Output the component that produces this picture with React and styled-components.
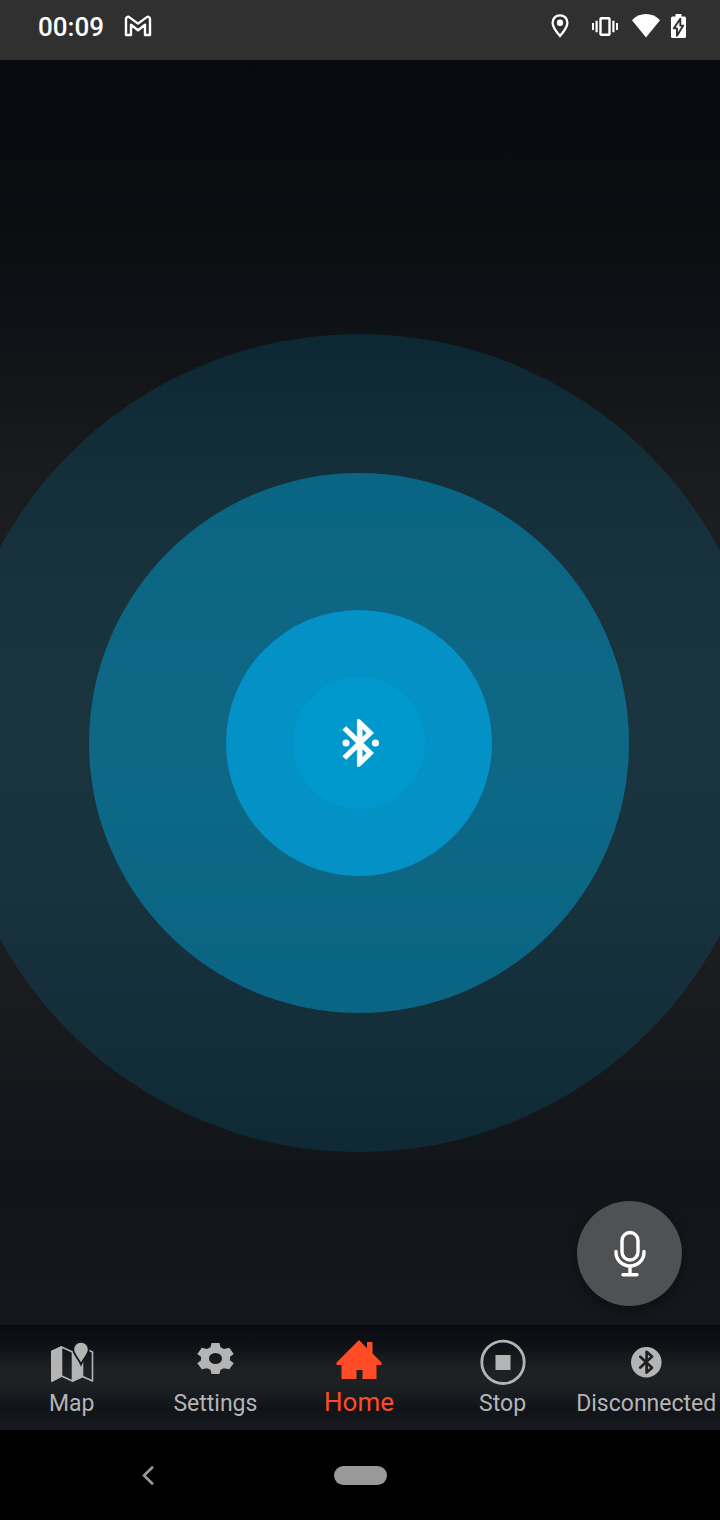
import React from "react";
import styled, { createGlobalStyle } from "styled-components";

const GlobalStyle = createGlobalStyle`
  *, *::before, *::after { box-sizing: border-box; }
  body { margin: 0; background: #000; font-family: Roboto, "Liberation Sans", sans-serif; }
  button { appearance: none; border: 0; padding: 0; background: none; color: inherit; font: inherit; cursor: pointer; }
  svg { display: block; }
`;

const Screen = styled.div`
  display: flex;
  flex-direction: column;
  min-height: 100vh;
  overflow: hidden;
`;

const StatusBar = styled.header`
  display: flex;
  align-items: center;
  justify-content: space-between;
  height: 60px;
  padding: 0 34px 8px 38px;
  background: #303030;
  color: #fff;
`;

const StatusGroup = styled.div`
  display: flex;
  align-items: center;
  gap: ${(p) => p.$gap}px;
`;

const Clock = styled.time`
  padding-top: 2px;
  font-size: 26px;
  line-height: 30px;
  font-weight: 500;
`;

const Stage = styled.main`
  position: relative;
  flex: 1;
  display: flex;
  align-items: center;
  justify-content: center;
  padding: 101px 2px 0 0;
  overflow: hidden;
  background: linear-gradient(
    #070b0f 0%,
    #0a0c10 12%,
    #0e1115 20%,
    #191b1e 33%,
    #202224 50%,
    #1e2023 62%,
    #191b1f 74%,
    #111418 88%,
    #14171c 100%
  );
`;

const Ring = styled.div`
  flex: none;
  display: flex;
  align-items: center;
  justify-content: center;
  width: ${(p) => p.$size}px;
  height: ${(p) => p.$size}px;
  border-radius: 50%;
  background: ${(p) => p.$color};
`;

const ConnectButton = styled.button`
  display: grid;
  place-items: center;
  width: 132px;
  height: 132px;
  border-radius: 50%;
  background: #0099cd;
`;

const MicButton = styled.button`
  position: absolute;
  right: 38px;
  bottom: 19px;
  display: grid;
  place-items: center;
  width: 105px;
  height: 105px;
  border-radius: 50%;
  background: #505153;
  box-shadow: 0 5px 12px rgba(0, 0, 0, 0.35);
`;

const TabBar = styled.nav`
  display: grid;
  grid-template-columns: repeat(5, minmax(0, 1fr));
  height: 105px;
  padding: 15px 2px 0 0;
  background: linear-gradient(#090b0f 0%, #0e1216 20%, #1e2124 43%, #1e2124 57%, #101318 80%, #171b20 100%);
`;

const Tab = styled.a`
  display: flex;
  flex-direction: column;
  align-items: center;
  gap: 4px;
  color: ${(p) => (p.$active ? "#ff4b26" : "#b4b4b4")};
  font-size: ${(p) => (p.$active ? 26 : 23)}px;
  line-height: ${(p) => (p.$active ? 28 : 32)}px;
  white-space: nowrap;
  text-decoration: none;
`;

const SystemBar = styled.footer`
  display: grid;
  grid-template-columns: repeat(3, 1fr);
  place-items: center;
  height: 90px;
  padding: 0 42px;
  background: #000;
`;

const SystemButton = styled.button`
  display: grid;
  place-items: center;
  width: 72px;
  height: 48px;
`;

const HomePill = styled.span`
  width: 53px;
  height: 19px;
  border-radius: 10px;
  background: #999;
`;

const MailIcon = () => (
  <svg width="28" height="22" viewBox="0 0 28 22" fill="none" stroke="#fff" strokeWidth="2.4" strokeLinejoin="round">
    <path d="M2 20V4C2 2 4 1.200 5.500 2.400L14 8.600L22.500 2.400C24 1.200 26 2 26 4V20H21V9.800L14 15.200L7 9.800V20Z" />
  </svg>
);

const PinIcon = () => (
  <svg width="18" height="24" viewBox="0 0 18 24" fill="none">
    <path d="M9 1.300C4.800 1.300 1.600 4.500 1.600 8.700C1.600 13.500 9 22 9 22S16.400 13.500 16.400 8.700C16.400 4.500 13.200 1.300 9 1.300Z" stroke="#fff" strokeWidth="2.3" />
    <circle cx="9" cy="8.800" r="3.200" fill="#fff" />
  </svg>
);

const VibrateIcon = () => (
  <svg width="26" height="20" viewBox="0 0 26 20" fill="#fff">
    <rect x="8.500" y="2.200" width="9" height="16.600" rx="0.800" fill="none" stroke="#fff" strokeWidth="2.400" />
    <path d="M0 7h2v7H0zM3.500 4.700h2.200v11.600H3.500zM20.300 4.700h2.200v11.600h-2.200zM24 7h2v7h-2z" />
  </svg>
);

const WifiIcon = () => (
  <svg width="28" height="24" viewBox="0 0 28 24" fill="#fff">
    <path d="M0 6.200C3.800 2.200 8.500 0 14 0S24.200 2.200 28 6.200L14 23.600Z" />
  </svg>
);

const BatteryIcon = () => (
  <svg width="15" height="24" viewBox="0 0 15 24">
    <path fill="#fff" d="M4.500 0H10.500V2.400H13.500Q15 2.400 15 3.900V22.500Q15 24 13.500 24H1.500Q0 24 0 22.500V3.900Q0 2.400 1.500 2.400H4.500Z" />
    <path fill="#fff" stroke="#303030" strokeWidth="1.900" strokeLinejoin="round" d="M9.300 4.800L2.800 14.400H6V21.800L12.200 11.600H9.300Z" />
  </svg>
);

const ConnectIcon = () => (
  <svg width="40" height="48" viewBox="0 0 40 48" fill="#fff">
    <g transform="translate(-8.400 -4.200) scale(2.430 2.350)">
      <path stroke="#fff" strokeWidth="0.250" d="M17.710 7.710L12 2h-1v7.590L6.410 5 5 6.410 10.590 12 5 17.590 6.410 19 11 14.410V22h1l5.710-5.710-4.300-4.290 4.300-4.290zM13 5.830l1.880 1.880L13 9.590V5.830zm1.880 10.460L13 18.170v-3.760l1.880 1.880z" />
    </g>
    <circle cx="7" cy="24" r="3.600" />
    <circle cx="36.400" cy="24" r="3.600" />
  </svg>
);

const MicIcon = () => (
  <svg width="32" height="48" viewBox="0 0 32 48" fill="none" stroke="#fff" strokeWidth="3.400" strokeLinecap="round">
    <rect x="8" y="2.500" width="16" height="27.500" rx="8" />
    <path d="M2 21.500V22.500A14 13.500 0 0 0 30 22.500V21.500M16 36V44.500M9 44.800H23" />
  </svg>
);

const MapIcon = () => (
  <svg width="44" height="44" viewBox="0 0 44 44">
    <g fill="none" stroke="currentColor" strokeWidth="1.600" strokeLinejoin="round">
      <path d="M1.800 11.500L11.500 7L22.500 12L32.500 7.500L42.500 12V41L32.500 36.500L22.500 41L11.500 36L1.800 41Z" />
      <path fill="currentColor" d="M1.800 11.500L11.500 7V36L1.800 41ZM22.500 12L32.500 7.500V36.500L22.500 41Z" />
    </g>
    <path fill="currentColor" stroke="#14171b" strokeWidth="1.800" d="M31 1.900C26.400 1.900 23.300 5.300 23.300 9.600C23.300 14.500 28 17.500 31 24.500C34 17.500 38.700 14.500 38.700 9.600C38.700 5.300 35.600 1.900 31 1.900Z" />
  </svg>
);

const GearIcon = () => (
  <svg width="44" height="44" viewBox="0 0 44 44">
    <path
      fill="currentColor"
      fillRule="evenodd"
      d="M18.500 3H26.500L27.500 7.300L31 8.900L36.200 7.700L40.700 14L37 16.700V20.300L40.700 23.300L36.200 29.300L31 28.200L27.500 29.800L26.500 34H18.500L17.500 29.800L14 28.200L8.800 29.300L4.300 23.300L8 20.300V16.700L4.300 14L8.800 7.700L14 8.900L17.500 7.300ZM22.500 13A6.500 5.500 0 1 0 22.500 24A6.500 5.500 0 1 0 22.500 13Z"
    />
  </svg>
);

const HouseIcon = () => (
  <svg width="46" height="44" viewBox="0 0 46 44">
    <path fill="currentColor" d="M23 0L31 8.200V2H36.500V13.500L45.500 22.500V25H40.500V39H26.500V30H20.500V39H5.500V25H0.500V22.500Z" />
  </svg>
);

const StopIcon = () => (
  <svg width="46" height="44" viewBox="0 0 46 44" overflow="visible">
    <circle cx="23" cy="22.300" r="21.200" fill="none" stroke="currentColor" strokeWidth="2.800" />
    <rect x="15.500" y="15" width="15" height="15" fill="currentColor" />
  </svg>
);

const BluetoothBadgeIcon = () => (
  <svg width="44" height="44" viewBox="0 0 44 44">
    <circle cx="22.300" cy="22.200" r="15.300" fill="currentColor" />
    <path fill="none" stroke="#1e2124" strokeWidth="2.700" strokeLinecap="round" strokeLinejoin="round" d="M16.300 16.800L28 27.800L22.600 32.500V11.800L28 16.600L16.300 27.600" />
  </svg>
);

const BackIcon = () => (
  <svg width="14" height="20" viewBox="0 0 14 20" fill="none" stroke="#999" strokeWidth="2.600">
    <path d="M12 1.700L3 10.500L12 19.300" />
  </svg>
);

const tabs = [
  { label: "Map", Icon: MapIcon },
  { label: "Settings", Icon: GearIcon },
  { label: "Home", Icon: HouseIcon, active: true },
  { label: "Stop", Icon: StopIcon },
  { label: "Disconnected", Icon: BluetoothBadgeIcon },
];

export default function App() {
  return (
    <Screen>
      <GlobalStyle />
      <StatusBar>
        <StatusGroup $gap={20}>
          <Clock>00:09</Clock>
          <MailIcon />
        </StatusGroup>
        <StatusGroup $gap={14}>
          <StatusGroup $gap={23}>
            <PinIcon />
            <VibrateIcon />
          </StatusGroup>
          <StatusGroup $gap={11}>
            <WifiIcon />
            <BatteryIcon />
          </StatusGroup>
        </StatusGroup>
      </StatusBar>

      <Stage>
        <Ring $size={818} $color="rgba(0, 153, 204, 0.16)">
          <Ring $size={540} $color="rgba(0, 153, 204, 0.5)">
            <Ring $size={266} $color="#0391c6">
              <ConnectButton aria-label="Connect over Bluetooth">
                <ConnectIcon />
              </ConnectButton>
            </Ring>
          </Ring>
        </Ring>
        <MicButton aria-label="Voice command">
          <MicIcon />
        </MicButton>
      </Stage>

      <TabBar>
        {tabs.map(({ label, Icon, active }) => (
          <Tab key={label} href="#" $active={active} aria-current={active ? "page" : undefined}>
            <Icon />
            {label}
          </Tab>
        ))}
      </TabBar>

      <SystemBar>
        <SystemButton aria-label="Back">
          <BackIcon />
        </SystemButton>
        <SystemButton aria-label="Home screen">
          <HomePill />
        </SystemButton>
      </SystemBar>
    </Screen>
  );
}
